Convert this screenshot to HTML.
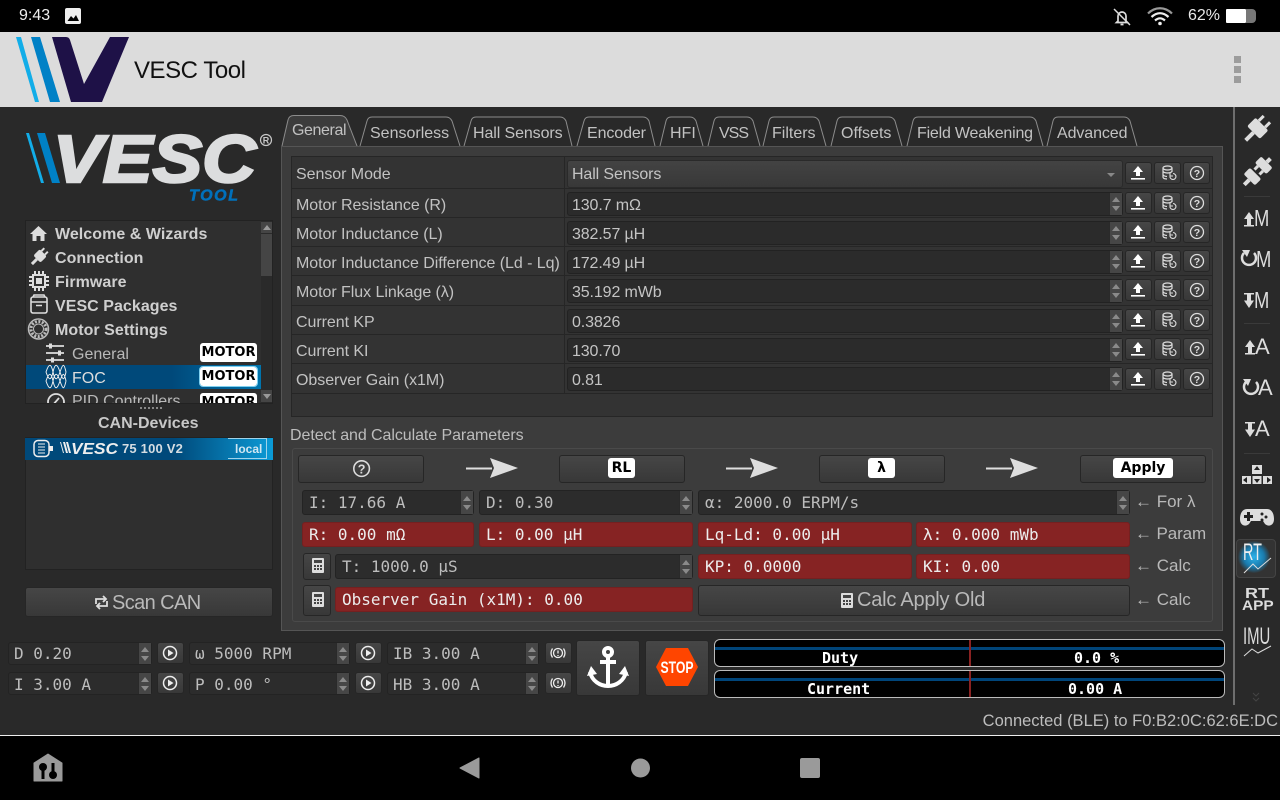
<!DOCTYPE html>
<html lang="en"><head><meta charset="utf-8"><title>VESC Tool</title>
<style>
html,body{margin:0;padding:0;width:1280px;height:800px;overflow:hidden;background:#292929}
body{position:relative;font-family:"Liberation Sans",sans-serif;color:#c4c4c4}
div,span,svg{box-sizing:border-box}
.a,.l,.m,.btn,.in,.red,.sp,.sm{position:absolute}
svg{position:absolute;overflow:visible}
.l{white-space:nowrap;font-size:16px;line-height:20px;color:#c2c2c2}
.m{white-space:nowrap;font-weight:700;font-size:16px;line-height:24px;color:#cfcfcf;left:55px;letter-spacing:.05px}
.sm{white-space:nowrap;font-size:16px;line-height:24px;color:#b9b9b9;left:72px}
.btn{background:linear-gradient(#464646,#383838);border:1px solid #262626;border-radius:3px}
.in{background:#2c2c2c;border:1px solid #232323;border-radius:3px;font-family:"DejaVu Sans Mono",monospace;font-size:16px;color:#bdbdbd;padding-left:6px;line-height:23px;white-space:nowrap}
.red{background:#862323;border:1px solid #742020;border-radius:3px;font-family:"DejaVu Sans Mono",monospace;font-size:16px;color:#ececec;padding-left:6px;line-height:23px;white-space:nowrap}
.row{position:absolute;left:292px;width:920px;background:#333;border-bottom:1px solid #262626}
.rl{letter-spacing:-.05px}
.f{position:absolute;left:567px;width:556px;background:#2b2b2b;border:1px solid #222;border-radius:3px;font-size:16px;color:#c4c4c4;padding-left:4px;line-height:26px;letter-spacing:-.12px}
.sp{width:13px;background:#464646;border-left:1px solid #2a2a2a}
.sp:before,.sp:after{content:"";position:absolute;left:2px;border-left:4px solid transparent;border-right:4px solid transparent}
.sp:before{top:calc(50% - 7px);border-bottom:5px solid #8a8a8a}
.sp:after{top:calc(50% + 2px);border-top:5px solid #8a8a8a}
.bd{position:absolute;left:200px;width:57px;height:19px;background:#fff;border-radius:3px;color:#000;font:700 13px/19px "DejaVu Sans",sans-serif;text-align:center}
.wb{position:absolute;background:#fff;border-radius:3px;color:#000;font:700 14px/20px "DejaVu Sans",sans-serif;text-align:center;top:458px;height:20px}
.bar{position:absolute;left:714px;width:511px;height:28px;background:#000;border:1px solid #bbb;border-radius:6px;overflow:hidden;font:700 15px/1 "DejaVu Sans Mono",monospace;color:#fff}
.ml{position:absolute;white-space:nowrap;font-size:23px;line-height:20px;color:#ddd;transform:scaleX(.8);transform-origin:left}
</style></head><body>

<!-- status bar -->
<div class="a" style="left:0;top:0;width:1280px;height:32px;background:#000"></div>
<div class="l" style="left:19px;top:6px;color:#eee;font-size:16px">9:43</div>
<svg style="left:65px;top:8px" width="16" height="16"><rect width="16" height="16" rx="2" fill="#eee"/><path d="M2.5 13L6 8l2.5 2.5L11 7l3 6z" fill="#000"/></svg>
<svg style="left:1113px;top:8px" width="18" height="18" fill="none" stroke="#ddd" stroke-width="1.7"><path d="M5 13V8a4 4 0 0 1 8 0v5l1.5 1.5h-11zM7.5 16.5h3"/><path d="M1 1l16 16" stroke-width="1.5"/></svg>
<svg style="left:1147px;top:7px" width="26" height="19" fill="none" stroke="#eee" stroke-width="2.2"><path d="M1 6.5C8-.5 18-.5 25 6.5" stroke="#999"/><path d="M4.5 10c5.500-5 11.500-5 17 0M8 13.500c3.500-3 6.500-3 10 0"/><circle cx="13" cy="16.500" r="1.800" fill="#eee" stroke="none"/></svg>
<div class="l" style="left:1188px;top:6px;color:#e8e8e8;font-size:16px">62%</div>
<div class="a" style="left:1226px;top:9px;width:20px;height:14px;background:#fff;border-radius:1px"></div>
<div class="a" style="left:1246px;top:9px;width:10px;height:14px;background:#777;border-radius:0 4px 4px 0"></div>

<!-- header -->
<div class="a" style="left:0;top:32px;width:1280px;height:75px;background:#dcdcdc"></div>
<svg style="left:0;top:0" width="140" height="107"><polygon points="16,37 21,37 39,102 35,102" fill="#12ade8"/><polygon points="31,37 40,37 60,102 50,102" fill="#0081c6"/><path d="M52 37H66Q69 37 70 40L84 84L110 37H129L102 102H71Z" fill="#1e1147"/></svg>
<div class="l" style="left:134px;top:57px;font-size:24px;line-height:28px;color:#111;letter-spacing:-.45px">VESC Tool</div>
<div class="a" style="left:1234px;top:56px;width:7px;height:7px;background:#9c9c9c"></div>
<div class="a" style="left:1234px;top:66px;width:7px;height:7px;background:#9c9c9c"></div>
<div class="a" style="left:1234px;top:76px;width:7px;height:7px;background:#9c9c9c"></div>

<!-- side logo -->
<svg style="left:0;top:0" width="280" height="210">
<polygon points="26,133 29,133 44,183 41,183" fill="#12ade8"/><polygon points="37,133 45,133 60,183 52,183" fill="#0081c6"/>
<text x="53" y="182" font-family="Liberation Sans" font-weight="700" font-style="italic" font-size="67" textLength="203" lengthAdjust="spacingAndGlyphs" fill="#dcddde" stroke="#dcddde" stroke-width="2.500">VESC</text>
<text x="189" y="200.500" font-family="Liberation Sans" font-weight="700" font-style="italic" font-size="16" textLength="49" fill="#0071bc" stroke="#0071bc" stroke-width=".5">TOOL</text>
<circle cx="266" cy="140" r="5.500" fill="none" stroke="#c8c8c8" stroke-width="1.200"/><text x="266" y="143.500" font-family="Liberation Sans" font-weight="700" font-size="9" text-anchor="middle" fill="#c8c8c8">R</text>
</svg>

<!-- menu -->
<div class="a" style="left:25px;top:220px;width:248px;height:184px;background:#2f2f2f;border:1px solid #222;overflow:hidden">
 <div class="a" style="left:0;top:144px;width:235px;height:24px;background:linear-gradient(90deg,#00497a 0,#00497a 62%,#0074ad 100%)"></div>
 <div class="a" style="left:235px;top:0;width:12px;height:182px;background:#2a2a2a"></div>
 <div class="a" style="left:235px;top:1px;width:12px;height:11px;background:#454545"></div>
 <div class="a" style="left:235px;top:13px;width:12px;height:42px;background:#454545"></div>
 <div class="a" style="left:235px;top:169px;width:12px;height:12px;background:#454545"></div>
 <div class="a" style="left:237px;top:4px;border-left:4px solid transparent;border-right:4px solid transparent;border-bottom:5px solid #999"></div>
 <div class="a" style="left:237px;top:173px;border-left:4px solid transparent;border-right:4px solid transparent;border-top:5px solid #999"></div>
</div>
<div class="m" style="top:223px">Welcome &amp; Wizards</div>
<div class="m" style="top:247px">Connection</div>
<div class="m" style="top:271px">Firmware</div>
<div class="m" style="top:295px">VESC Packages</div>
<div class="m" style="top:319px">Motor Settings</div>
<div class="sm" style="top:343px">General</div>
<div class="sm" style="top:367px;color:#ddd">FOC</div>
<div class="a" style="left:26px;top:390px;width:234px;height:13px;overflow:hidden"><div class="sm" style="left:46px;top:0">PID Controllers</div><div class="bd" style="left:174px;top:3px">MOTOR</div>
<svg style="left:21px;top:3px" width="20" height="20" fill="none" stroke="#ddd" stroke-width="1.800"><circle cx="9" cy="9" r="8"/><path d="M5 13l7-8"/></svg></div>
<div class="bd" style="top:343px">MOTOR</div>
<div class="bd" style="top:367px;outline:1px solid #7fd0f0">MOTOR</div>
<svg style="left:0;top:0" width="80" height="400" fill="#ddd">
<path d="M38.500 226L47 234h-2.500v7h-4v-5h-4v5h-4v-7H30z"/>
<g transform="translate(39 257) rotate(45)"><rect x="-5" y="-6" width="10" height="9" rx="2"/><rect x="-3.500" y="-10" width="2" height="4"/><rect x="1.500" y="-10" width="2" height="4"/><rect x="-1.500" y="3" width="3" height="7"/></g>
<rect x="33" y="275" width="12" height="12" fill="none" stroke="#ddd" stroke-width="2"/><rect x="36" y="278" width="6" height="6"/><path d="M29 276h3v2h-3zM29 280h3v2h-3zM29 284h3v2h-3zM46 276h3v2h-3zM46 280h3v2h-3zM46 284h3v2h-3zM34 271h2v3h-2zM38 271h2v3h-2zM42 271h2v3h-2zM34 288h2v3h-2zM38 288h2v3h-2zM42 288h2v3h-2z"/>
<g fill="none" stroke="#ddd" stroke-width="1.600"><rect x="31" y="297" width="16" height="16" rx="2"/><path d="M31 302h16M36 305.500h6"/><path d="M33 297l1-2h10l1 2"/></g>
<g fill="none" stroke="#bbb"><circle cx="38.500" cy="329" r="10" stroke-width="1.500"/><circle cx="38.500" cy="329" r="7.500" stroke-width="3" stroke-dasharray="2 1.500"/><circle cx="38.500" cy="329" r="5" stroke-width="1"/></g>
<g fill="none" stroke="#ddd" stroke-width="1.800"><path d="M46 346h18M46 353h18M46 360h18"/></g><rect x="49" y="343.500" width="3" height="5"/><rect x="58" y="350.500" width="3" height="5"/><rect x="51" y="357.500" width="3" height="5"/>
<g fill="none" stroke="#eee" stroke-width="1"><path d="M46 372c3-9 5-9 7 0s4 9 7 0 4-9 6 0M46 372c3 9 5 9 7 0s4-9 7 0 4 9 6 0M46 381c3-9 5-9 7 0s4 9 7 0 4-9 6 0M46 381c3 9 5 9 7 0s4-9 7 0 4 9 6 0"/></g>
</svg>

<!-- splitter & CAN -->
<div class="a" style="left:140px;top:407px;width:22px;height:2px;background:repeating-linear-gradient(90deg,#888 0 2px,transparent 2px 4px)"></div>
<div class="l" style="left:98px;top:413px;font-weight:700;color:#c8c8c8;line-height:22px">CAN-Devices</div>
<div class="a" style="left:25px;top:437px;width:248px;height:133px;background:#2f2f2f;border:1px solid #222"></div>
<div class="a" style="left:25px;top:438px;width:248px;height:22px;background:linear-gradient(90deg,#00497a 0,#00497a 60%,#0b9bd7 100%)"></div>
<div class="a" style="left:228px;top:438px;width:39px;height:21px;border:1px solid #9fd3ea;border-left:0;font:700 12px/21px 'Liberation Sans',sans-serif;color:#cfe6f2;padding-left:7px">local</div>
<svg style="left:33px;top:439px" width="90" height="20"><rect x="1" y="1.500" width="15" height="16" rx="4" fill="none" stroke="#eee" stroke-width="1.500"/><path d="M5 5h7M5 8h7M5 11h7M5 14h7" stroke="#eee"/><rect x="16" y="7" width="4" height="5" fill="#eee"/><path d="M27 3l3 11h1L28 3zM30 3l3 11h2L32 3zM33 3l3 11h2L35 3z" fill="#eee"/>
<text x="38" y="15" font-family="Liberation Sans" font-weight="700" font-style="italic" font-size="16" textLength="47" lengthAdjust="spacingAndGlyphs" fill="#eee">VESC</text></svg>
<div class="l" style="left:122px;top:439px;font-weight:700;font-size:13px;color:#d5dde2;letter-spacing:.2px">75 100 V2</div>
<div class="btn" style="left:25px;top:587px;width:248px;height:30px"></div>
<svg style="left:94px;top:595px" width="15" height="15" fill="none" stroke="#ddd" stroke-width="1.800"><path d="M2 9V4h9M13 6v5H4"/><path d="M9 1l3 3-3 3M6 8l-3 3 3 3"/></svg>
<div class="l" style="left:112px;top:593px;font-size:20px;color:#b9b9b9;letter-spacing:-.6px">Scan CAN</div>

<!-- tabs -->
<svg style="left:0;top:0" width="1240" height="150" fill="none" stroke="#8c8c8c" stroke-width="1">
<path d="M282 146L288 120Q289 115.500 294 115.500H340Q345 115.500 347 120L357 146V150H282Z" fill="#3c3c3c"/>
<path d="M360 146L367 121Q368 117 372 117H446Q450 117 452 121L460 146"/>
<path d="M464 146L471 121Q472 117 476 117H560Q564 117 566 121L572 146"/>
<path d="M577 146L584 121Q585 117 589 117H643Q647 117 649 121L655 146"/>
<path d="M660 146L666 121Q667 117 671 117H690Q694 117 696 121L703 146"/>
<path d="M708 146L714 121Q715 117 719 117H747Q751 117 753 121L760 146"/>
<path d="M763 146L769 121Q770 117 774 117H813Q817 117 819 121L826 146"/>
<path d="M831 146L837 121Q838 117 842 117H889Q893 117 895 121L902 146"/>
<path d="M907 146L913 121Q914 117 918 117H1030Q1034 117 1036 121L1043 146"/>
<path d="M1047 146L1053 121Q1054 117 1058 117H1124Q1128 117 1130 121L1137 146"/>
</svg>
<div class="l" style="left:292px;top:121px;letter-spacing:-.4px">General</div>
<div class="l" style="left:370px;top:124px">Sensorless</div>
<div class="l" style="left:473px;top:124px;letter-spacing:-.1px">Hall Sensors</div>
<div class="l" style="left:587px;top:124px;letter-spacing:-.1px">Encoder</div>
<div class="l" style="left:670px;top:124px">HFI</div>
<div class="l" style="left:719px;top:124px;letter-spacing:-1px">VSS</div>
<div class="l" style="left:772px;top:124px">Filters</div>
<div class="l" style="left:841px;top:124px">Offsets</div>
<div class="l" style="left:917px;top:124px;letter-spacing:-.2px">Field Weakening</div>
<div class="l" style="left:1057px;top:124px;letter-spacing:-.1px">Advanced</div>

<!-- pane -->
<div class="a" style="left:281px;top:146px;width:942px;height:485px;background:#3c3c3c;border:1px solid #555"></div>
<div class="a" style="left:291px;top:156px;width:922px;height:261px;background:#333;border:1px solid #262626"></div>
<div class="row" style="top:157px;height:32px"></div>
<div class="row" style="top:189px;height:29px"></div>
<div class="row" style="top:218px;height:29px"></div>
<div class="row" style="top:247px;height:29px"></div>
<div class="row" style="top:276px;height:30px"></div>
<div class="row" style="top:306px;height:29px"></div>
<div class="row" style="top:335px;height:29px"></div>
<div class="row" style="top:364px;height:30px"></div>
<div class="a" style="left:564px;top:157px;width:1px;height:236px;background:#262626"></div>
<div class="l rl" style="left:296px;top:165px">Sensor Mode</div>
<div class="l rl" style="left:296px;top:196px">Motor Resistance (R)</div>
<div class="l rl" style="left:296px;top:225px">Motor Inductance (L)</div>
<div class="l rl" style="left:296px;top:254px">Motor Inductance Difference (Ld - Lq)</div>
<div class="l rl" style="left:296px;top:283px">Motor Flux Linkage (λ)</div>
<div class="l rl" style="left:296px;top:313px">Current KP</div>
<div class="l rl" style="left:296px;top:342px">Current KI</div>
<div class="l rl" style="left:296px;top:371px">Observer Gain (x1M)</div>

<div class="f" style="top:160px;height:28px;line-height:28px;background:linear-gradient(#434343,#383838);border-color:#2a2a2a">Hall Sensors<div class="a" style="left:539px;top:12px;border-left:4px solid transparent;border-right:4px solid transparent;border-top:4px solid #888"></div></div>
<div class="f" style="top:192px;height:24px;line-height:25px">130.7 mΩ<div class="sp" style="right:0;top:0;height:22px"></div></div>
<div class="f" style="top:221px;height:24px;line-height:25px">382.57 µH<div class="sp" style="right:0;top:0;height:22px"></div></div>
<div class="f" style="top:250px;height:24px;line-height:25px">172.49 µH<div class="sp" style="right:0;top:0;height:22px"></div></div>
<div class="f" style="top:279px;height:24px;line-height:25px">35.192 mWb<div class="sp" style="right:0;top:0;height:22px"></div></div>
<div class="f" style="top:309px;height:24px;line-height:25px">0.3826<div class="sp" style="right:0;top:0;height:22px"></div></div>
<div class="f" style="top:338px;height:24px;line-height:25px">130.70<div class="sp" style="right:0;top:0;height:22px"></div></div>
<div class="f" style="top:367px;height:24px;line-height:25px">0.81<div class="sp" style="right:0;top:0;height:22px"></div></div>

<!-- row buttons -->
<svg width="0" height="0" style="left:0;top:0"><defs>
<g id="up"><path d="M8 1l5 6h-3v4H6V7H3z" fill="#fff"/><rect x="1" y="13" width="14" height="1.600" fill="#fff"/></g>
<g id="db" fill="none" stroke="#ddd" stroke-width="1.200"><ellipse cx="6.500" cy="3" rx="4.500" ry="2"/><path d="M2 3v9c0 1.500 2 2 4 2M11 3v4M2 6c0 1.500 3 2 4.500 2S11 7.500 11 6M2 9.500c0 1 2 2 4 2"/><path d="M9 11a3 3 0 1 0 3-2.500M9 8v3h3" stroke-width="1.100"/></g>
<g id="hp"><circle cx="8" cy="8" r="6.500" fill="none" stroke="#ddd" stroke-width="1.300"/><text x="8" y="12" font-family="Liberation Sans" font-weight="700" font-size="10.500" text-anchor="middle" fill="#ddd">?</text></g>
<g id="pl"><circle cx="8" cy="8" r="6.500" fill="none" stroke="#eee" stroke-width="1.500"/><path d="M6 4.500l5.500 3.500L6 11.500z" fill="#eee"/></g>
<g id="br" fill="none" stroke="#eee" stroke-width="1.300"><circle cx="8" cy="8" r="4.500"/><path d="M2.500 3.500c-2 3-2 6 0 9M13.500 3.500c2 3 2 6 0 9M8 5.500v3" /><path d="M8 10v1"/></g>
<g id="calc"><rect x="1" y="0" width="12" height="15" rx="1" fill="#ddd"/><rect x="3" y="2" width="8" height="3" fill="#444"/><path d="M3 7h2v2H3zM6 7h2v2H6zM9 7h2v2H9zM3 10h2v2H3zM6 10h2v2H6zM9 10h2v2H9z" fill="#444"/></g>
</defs></svg>
<div class="btn" style="left:1125px;top:162px;width:27px;height:22px"></div><div class="btn" style="left:1154px;top:162px;width:27px;height:22px"></div><div class="btn" style="left:1183px;top:162px;width:27px;height:22px"></div>
<div class="btn" style="left:1125px;top:192px;width:27px;height:22px"></div><div class="btn" style="left:1154px;top:192px;width:27px;height:22px"></div><div class="btn" style="left:1183px;top:192px;width:27px;height:22px"></div>
<div class="btn" style="left:1125px;top:221px;width:27px;height:22px"></div><div class="btn" style="left:1154px;top:221px;width:27px;height:22px"></div><div class="btn" style="left:1183px;top:221px;width:27px;height:22px"></div>
<div class="btn" style="left:1125px;top:250px;width:27px;height:22px"></div><div class="btn" style="left:1154px;top:250px;width:27px;height:22px"></div><div class="btn" style="left:1183px;top:250px;width:27px;height:22px"></div>
<div class="btn" style="left:1125px;top:279px;width:27px;height:22px"></div><div class="btn" style="left:1154px;top:279px;width:27px;height:22px"></div><div class="btn" style="left:1183px;top:279px;width:27px;height:22px"></div>
<div class="btn" style="left:1125px;top:309px;width:27px;height:22px"></div><div class="btn" style="left:1154px;top:309px;width:27px;height:22px"></div><div class="btn" style="left:1183px;top:309px;width:27px;height:22px"></div>
<div class="btn" style="left:1125px;top:338px;width:27px;height:22px"></div><div class="btn" style="left:1154px;top:338px;width:27px;height:22px"></div><div class="btn" style="left:1183px;top:338px;width:27px;height:22px"></div>
<div class="btn" style="left:1125px;top:368px;width:27px;height:22px"></div><div class="btn" style="left:1154px;top:368px;width:27px;height:22px"></div><div class="btn" style="left:1183px;top:368px;width:27px;height:22px"></div>
<svg style="left:0;top:0" width="1280" height="400">
<use href="#up" x="1130" y="165"/><use href="#db" x="1161" y="165"/><use href="#hp" x="1189" y="165"/>
<use href="#up" x="1130" y="195"/><use href="#db" x="1161" y="195"/><use href="#hp" x="1189" y="195"/>
<use href="#up" x="1130" y="224"/><use href="#db" x="1161" y="224"/><use href="#hp" x="1189" y="224"/>
<use href="#up" x="1130" y="253"/><use href="#db" x="1161" y="253"/><use href="#hp" x="1189" y="253"/>
<use href="#up" x="1130" y="282"/><use href="#db" x="1161" y="282"/><use href="#hp" x="1189" y="282"/>
<use href="#up" x="1130" y="312"/><use href="#db" x="1161" y="312"/><use href="#hp" x="1189" y="312"/>
<use href="#up" x="1130" y="341"/><use href="#db" x="1161" y="341"/><use href="#hp" x="1189" y="341"/>
<use href="#up" x="1130" y="371"/><use href="#db" x="1161" y="371"/><use href="#hp" x="1189" y="371"/>
</svg>

<!-- detect group -->
<div class="l" style="left:290px;top:426px;font-size:16px;color:#bdbdbd;letter-spacing:-.07px">Detect and Calculate Parameters</div>
<div class="a" style="left:292px;top:448px;width:921px;height:174px;border:1px solid #4a4a4a;border-radius:3px"></div>
<div class="btn" style="left:298px;top:455px;width:126px;height:28px"></div>
<div class="btn" style="left:559px;top:455px;width:126px;height:28px"></div>
<div class="btn" style="left:819px;top:455px;width:126px;height:28px"></div>
<div class="btn" style="left:1080px;top:455px;width:126px;height:28px"></div>
<svg style="left:0;top:0" width="1280" height="500" fill="#dedede">
<use href="#hp" transform="translate(352 459) scale(1.200)"/>
<path d="M466 467.500h26v2h-26zM490 458l28 10-28 10 4-10z"/>
<path d="M726 467.500h26v2h-26zM750 458l28 10-28 10 4-10z"/>
<path d="M986 467.500h26v2h-26zM1010 458l28 10-28 10 4-10z"/>
</svg>
<div class="wb" style="left:608px;width:27px">RL</div>
<div class="wb" style="left:868px;width:27px">λ</div>
<div class="wb" style="left:1113px;width:60px">Apply</div>

<div class="in" style="left:302px;top:490px;width:172px;height:25px">I: 17.66 A<div class="sp" style="right:0;top:0;height:23px"></div></div>
<div class="in" style="left:479px;top:490px;width:214px;height:25px">D: 0.30<div class="sp" style="right:0;top:0;height:23px"></div></div>
<div class="in" style="left:698px;top:490px;width:432px;height:25px">α: 2000.0 ERPM/s<div class="sp" style="right:0;top:0;height:23px"></div></div>
<div class="red" style="left:302px;top:522px;width:172px;height:25px">R: 0.00 mΩ</div>
<div class="red" style="left:479px;top:522px;width:214px;height:25px">L: 0.00 µH</div>
<div class="red" style="left:698px;top:522px;width:214px;height:25px">Lq-Ld: 0.00 µH</div>
<div class="red" style="left:916px;top:522px;width:214px;height:25px">λ: 0.000 mWb</div>
<div class="btn" style="left:303px;top:553px;width:28px;height:27px"></div>
<div class="in" style="left:335px;top:554px;width:358px;height:25px">T: 1000.0 µS<div class="sp" style="right:0;top:0;height:23px"></div></div>
<div class="red" style="left:698px;top:554px;width:214px;height:25px">KP: 0.0000</div>
<div class="red" style="left:916px;top:554px;width:214px;height:25px">KI: 0.00</div>
<div class="btn" style="left:303px;top:585px;width:28px;height:31px"></div>
<div class="red" style="left:335px;top:587px;width:358px;height:25px">Observer Gain (x1M): 0.00</div>
<div class="btn" style="left:698px;top:585px;width:432px;height:31px"></div>
<svg style="left:0;top:0" width="1280" height="620"><use href="#calc" x="311" y="558"/><use href="#calc" x="311" y="592"/><use href="#calc" x="840" y="593"/></svg>
<div class="l" style="left:857px;top:590px;font-size:20px;color:#b9b9b9;letter-spacing:-.22px">Calc Apply Old</div>
<div class="l" style="left:1135px;top:492px;font-size:17px;color:#b9b9b9">← For λ</div>
<div class="l" style="left:1135px;top:524px;font-size:17px;color:#b9b9b9;letter-spacing:-.1px">← Param</div>
<div class="l" style="left:1135px;top:556px;font-size:17px;color:#b9b9b9">← Calc</div>
<div class="l" style="left:1135px;top:590px;font-size:17px;color:#b9b9b9">← Calc</div>

<!-- right toolbar -->
<div class="a" style="left:1233px;top:107px;width:2px;height:598px;background:#6e6e6e"></div>
<div class="a" style="left:1244px;top:196px;width:26px;height:1px;background:#3a3a3a"></div>
<div class="a" style="left:1244px;top:323px;width:26px;height:1px;background:#3a3a3a"></div>
<div class="a" style="left:1244px;top:453px;width:26px;height:1px;background:#3a3a3a"></div>
<div class="btn" style="left:1236px;top:539px;width:40px;height:39px;background:#333;border-color:#444;border-radius:4px"></div>
<div class="a" style="left:1238px;top:541px;width:32px;height:32px;border-radius:50%;background:radial-gradient(circle,#2cb2ea 0,#1a7aac 45%,rgba(40,80,100,0) 72%)"></div>
<svg style="left:1236px;top:107px" width="44" height="600" fill="#ddd" stroke="none">
<g transform="translate(21 22) rotate(45)"><rect x="-9" y="-7" width="18" height="12" rx="2"/><rect x="-6" y="-14" width="3" height="7"/><rect x="3" y="-14" width="3" height="7"/><rect x="-2" y="5" width="4" height="11"/></g>
<g transform="translate(21 65) rotate(45)"><rect x="-8" y="-14" width="16" height="9" rx="2"/><rect x="-2" y="-19" width="4" height="5"/><rect x="-8" y="2" width="16" height="9" rx="2"/><rect x="-5" y="-5" width="3" height="5"/><rect x="2" y="-5" width="3" height="5"/><rect x="-2" y="11" width="4" height="7"/></g>
<path d="M13 105l5 7h-3v6h3v1.500H8V118h3v-6H8z"/>
<path d="M8 146a7 7 0 1 0 10 0" fill="none" stroke="#ddd" stroke-width="2.500"/><path d="M6 143h8l-3 7z"/>
<path d="M8 186h10v1.500h-3v6h3L13 201l-5-7.500h3v-6H8z"/>
<path d="M14 233l5 7h-3v6h3v1.500h-10V246h3v-6H9z"/>
<path d="M10 275a7 7 0 1 0 10 0" fill="none" stroke="#ddd" stroke-width="2.500"/><path d="M7 272h8l-3 7z"/>
<path d="M9 315h10v1.500h-3v6h3L14 330l-5-7.500h3v-6H9z"/>
<rect x="16" y="358" width="10" height="9"/><rect x="6" y="369" width="9" height="8"/><rect x="16.500" y="369" width="9" height="8"/><rect x="27" y="369" width="9" height="8"/>
<path d="M21 359l3 4h-6zM21 376l-3-4h6zM7 373l4-3v6zM35 373l-4-3v6z" fill="#222"/>
<path d="M11 402h20c5 0 7 5 7 10 0 7-6 8-9 5l-2-3H15l-2 3c-3 3-9 2-9-5 0-5 2-10 7-10z"/>
<path d="M11 405v3H8v3h3v3h3v-3h3v-3h-3v-3z" fill="#222"/><circle cx="26" cy="407" r="1.500" fill="#222"/><circle cx="30" cy="410" r="1.500" fill="#222"/><circle cx="26" cy="413" r="1.500" fill="#222"/>
<path d="M8 466l9-9 5 5 13-11M8 549l8-7 6 4 13-7" fill="none" stroke="#ddd" stroke-width="1"/>
<path d="M17 586l3 3 3-3M17 591l3 3 3-3" fill="none" stroke="#444" stroke-width="1"/>
</svg>
<div class="ml" style="left:1254px;top:208px">M</div>
<div class="ml" style="left:1256px;top:249px">M</div>
<div class="ml" style="left:1254px;top:290px">M</div>
<div class="ml" style="left:1255px;top:337px;transform:none;font-size:22px">A</div>
<div class="ml" style="left:1258px;top:378px;transform:none;font-size:22px">A</div>
<div class="ml" style="left:1255px;top:419px;transform:none;font-size:22px">A</div>
<div class="l" style="left:1243px;top:542px;font-size:24px;line-height:22px;color:#eee;transform:scaleX(.6);transform-origin:left">RT</div>
<div class="l" style="left:1245px;top:587px;font-weight:700;font-size:15px;line-height:14px;color:#ddd;transform:scaleX(1.200);transform-origin:left">RT</div>
<div class="l" style="left:1242px;top:599px;font-weight:700;font-size:14px;line-height:13px;color:#ddd;transform:scaleX(1.100);transform-origin:left">APP</div>
<div class="l" style="left:1243px;top:626px;font-size:24px;line-height:22px;color:#ddd;transform:scaleX(.62);transform-origin:left">IMU</div>

<!-- bottom controls -->
<div class="in" style="left:8px;top:642px;width:144px;height:23px;line-height:21px;padding-left:5px">D 0.20<div class="sp" style="right:0;top:0;height:21px"></div></div>
<div class="in" style="left:8px;top:672px;width:144px;height:23px;line-height:23px;padding-left:5px">I 3.00 A<div class="sp" style="right:0;top:0;height:21px"></div></div>
<div class="in" style="left:189px;top:642px;width:161px;height:23px;line-height:21px;padding-left:5px">ω 5000 RPM<div class="sp" style="right:0;top:0;height:21px"></div></div>
<div class="in" style="left:189px;top:672px;width:161px;height:23px;line-height:23px;padding-left:5px">P 0.00 °<div class="sp" style="right:0;top:0;height:21px"></div></div>
<div class="in" style="left:387px;top:642px;width:152px;height:23px;line-height:21px;padding-left:5px">IB 3.00 A<div class="sp" style="right:0;top:0;height:21px"></div></div>
<div class="in" style="left:387px;top:672px;width:152px;height:23px;line-height:23px;padding-left:5px">HB 3.00 A<div class="sp" style="right:0;top:0;height:21px"></div></div>
<div class="btn" style="left:157px;top:642px;width:27px;height:22px"></div><div class="btn" style="left:157px;top:672px;width:27px;height:22px"></div>
<div class="btn" style="left:355px;top:642px;width:27px;height:22px"></div><div class="btn" style="left:355px;top:672px;width:27px;height:22px"></div>
<div class="btn" style="left:545px;top:642px;width:27px;height:22px"></div><div class="btn" style="left:545px;top:672px;width:27px;height:22px"></div>
<div class="btn" style="left:576px;top:640px;width:64px;height:56px"></div>
<div class="btn" style="left:645px;top:640px;width:64px;height:56px"></div>
<svg style="left:0;top:0" width="1280" height="720">
<use href="#pl" x="162" y="645"/><use href="#pl" x="162" y="675"/><use href="#pl" x="360" y="645"/><use href="#pl" x="360" y="675"/><use href="#br" x="550" y="645"/><use href="#br" x="550" y="675"/>
<g fill="none" stroke="#fff" stroke-width="4"><circle cx="608" cy="652" r="4"/><path d="M608 656v30M600 662h16"/><path d="M590 672c2 9 10 14 18 14s16-5 18-14"/></g>
<path d="M587 676l4-10 6 8zM629 676l-4-10-6 8z" fill="#fff"/>
<polygon points="666,648 688,648 698,667 688,686 666,686 656,667" fill="#ff4500"/>
<text x="677" y="673" font-family="Liberation Sans" font-weight="700" font-size="17" text-anchor="middle" textLength="33" lengthAdjust="spacingAndGlyphs" fill="#fff">STOP</text>
</svg>
<div class="bar" style="top:639px"><div class="a" style="left:0;top:7px;width:510px;height:3px;background:#00457a"></div><div class="a" style="left:254px;top:0;width:2px;height:28px;background:#8a2222"></div><div class="a" style="left:107px;top:11px">Duty</div><div class="a" style="left:359px;top:11px">0.0 %</div></div>
<div class="bar" style="top:670px"><div class="a" style="left:0;top:7px;width:510px;height:3px;background:#00457a"></div><div class="a" style="left:254px;top:0;width:2px;height:28px;background:#8a2222"></div><div class="a" style="left:92px;top:11px">Current</div><div class="a" style="left:353px;top:11px">0.00 A</div></div>
<div class="l" style="right:2px;top:711px;color:#bdbdbd;font-size:16.500px">Connected (BLE) to F0:B2:0C:62:6E:DC</div>

<!-- nav -->
<div class="a" style="left:0;top:735px;width:1280px;height:65px;background:#000;border-top:1px solid #eee"></div>
<svg style="left:0;top:735px" width="1280" height="65"><path d="M48 19L62 28V46H34V28z" fill="#9a9a9a" stroke="#9a9a9a" stroke-width="1" stroke-linejoin="round"/><circle cx="43" cy="32" r="4" fill="#000"/><rect x="41.500" y="32" width="3" height="12" fill="#000"/><circle cx="53" cy="40" r="4" fill="#000"/><rect x="51.500" y="28" width="3" height="12" fill="#000"/>
<path d="M479 23V43L460 33z" fill="#9a9a9a" stroke="#9a9a9a" stroke-linejoin="round"/><circle cx="640.500" cy="33" r="9.500" fill="#9a9a9a"/><rect x="800" y="23" width="20" height="20" rx="2" fill="#9a9a9a"/></svg>
</body></html>
